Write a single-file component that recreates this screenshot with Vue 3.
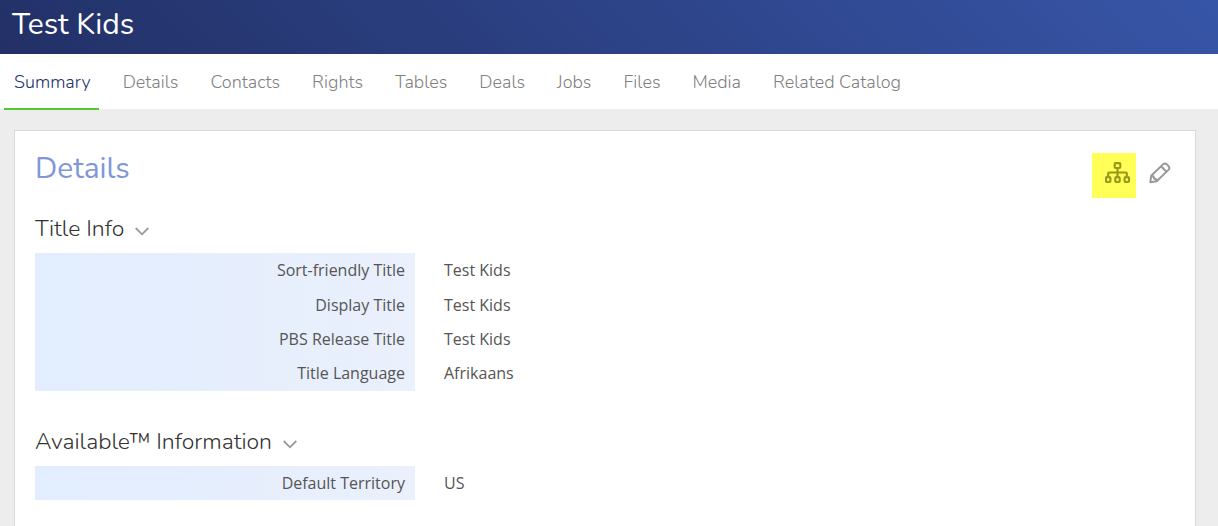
<script setup>
import { ref, reactive } from 'vue'

const tabs = ['Summary', 'Details', 'Contacts', 'Rights', 'Tables', 'Deals', 'Jobs', 'Files', 'Media', 'Related Catalog']
const active = ref('Summary')

const sections = reactive([
  {
    title: 'Title Info',
    open: true,
    rows: [
      ['Sort-friendly Title', 'Test Kids'],
      ['Display Title', 'Test Kids'],
      ['PBS Release Title', 'Test Kids'],
      ['Title Language', 'Afrikaans'],
    ],
  },
  {
    title: 'Available™ Information',
    open: true,
    rows: [['Default Territory', 'US']],
  },
])
</script>

<template>
  <div class="page">
    <header class="banner">
      <h1>Test Kids</h1>
    </header>
    <nav class="tabs">
      <a
        v-for="tab in tabs"
        :key="tab"
        href="#"
        :class="{ active: tab === active }"
        @click.prevent="active = tab"
      >{{ tab }}</a>
    </nav>
    <main class="card">
      <div class="card-head">
        <h2>Details</h2>
        <div class="actions">
          <button class="hierarchy" type="button" aria-label="Show hierarchy">
            <svg width="26" height="22" viewBox="0 0 26 22" fill="none" stroke="currentColor" stroke-width="2.2" stroke-linejoin="round">
              <rect x="9.700" y="1.200" width="5.600" height="4.800" rx="1" />
              <path d="M12.500 6v8M3.200 14v-2.500q0-1 1-1h16.600q1 0 1 1V14" />
              <rect x="1" y="15.200" width="4.400" height="4.800" rx="1" />
              <rect x="10.300" y="15.200" width="4.400" height="4.800" rx="1" />
              <rect x="19.600" y="15.200" width="4.400" height="4.800" rx="1" />
            </svg>
          </button>
          <button class="edit" type="button" aria-label="Edit">
            <svg width="22" height="22" viewBox="0 0 22 22" fill="none" stroke="currentColor" stroke-width="2" stroke-linejoin="round">
              <path d="M1.300 20.200l.9-6.400L14.200 2.100q1.700-1.300 3.300 0l2.200 2.200q1.300 1.700 0 3.300L7.700 19.300zM2.200 13.800q2.800 0 2.800 2.800 2.700 0 2.700 2.700M12 4.300l5.500 5.500" />
            </svg>
          </button>
        </div>
      </div>
      <section v-for="section in sections" :key="section.title">
        <h3>
          <button type="button" :aria-expanded="section.open" @click="section.open = !section.open">
            {{ section.title }}
            <svg width="14" height="9" viewBox="0 0 14 9" fill="none" stroke="#999" stroke-width="1.8">
              <path d="M.7 1l6.300 6.300L13.300 1" />
            </svg>
          </button>
        </h3>
        <table v-if="section.open">
          <tbody>
            <tr v-for="[label, value] in section.rows" :key="label">
              <th scope="row">{{ label }}</th>
              <td>{{ value }}</td>
            </tr>
          </tbody>
        </table>
      </section>
    </main>
  </div>
</template>

<style>
body {
  background: #ededed;
}
</style>

<style scoped>
.page {
  display: flex;
  flex-direction: column;
  min-height: 100vh;
  font-family: "Open Sans", sans-serif;
  font-size: 16px;
  line-height: 24px;
  color: #555;
}
h1, h2, h3 {
  margin: 0;
  font-family: Nunito, Lato, sans-serif;
  font-weight: 400;
}
.banner {
  padding: 5px 12px 9px;
  background: linear-gradient(45deg, #223066, #3755a7);
  color: #fff;
}
h1 {
  font-size: 30px;
  line-height: 40px;
}
.tabs {
  display: flex;
  gap: 14px;
  padding: 0 4px;
  height: 55px;
  background: #fff;
  font-family: Nunito, Lato, sans-serif;
  font-size: 18px;
  font-weight: 300;
}
.tabs a {
  margin-bottom: -1px;
  padding: 16px 8px 14px 10px;
  border-bottom: 2px solid transparent;
  color: #808080;
  text-decoration: none;
  white-space: nowrap;
}
.tabs a.active {
  border-color: #4fcb30;
  color: #223066;
}
.card {
  flex: 1;
  margin: 21px 22px 0 14px;
  padding: 22px 15px 0 20px;
  border: 1px solid #d9d9d9;
  border-bottom: 0;
  background: #fff;
}
.card-head {
  display: flex;
  justify-content: space-between;
  align-items: flex-start;
  margin-bottom: 15px;
}
h2 {
  padding-top: 4px;
  color: #7f97d6;
  font-size: 30px;
  line-height: 24px;
}
button {
  border: 0;
  margin: 0;
  padding: 0;
  background: none;
  color: inherit;
  font: inherit;
  cursor: pointer;
}
.actions {
  display: flex;
}
.actions svg {
  display: block;
}
.hierarchy {
  padding: 9px 5px 14px 13px;
  background: #ffff58;
  color: #98981c;
}
.edit {
  padding: 9px 9px 14px 13px;
  color: #999;
}
section + section {
  margin-top: 35px;
}
h3 {
  padding-bottom: 8px;
  font-size: 23px;
  font-weight: 300;
  line-height: 32px;
}
h3 button {
  display: flex;
  align-items: center;
  gap: 11px;
  color: #333;
}
h3 svg {
  margin-top: 4px;
}
table {
  width: 100%;
  border-collapse: collapse;
}
th {
  box-sizing: border-box;
  width: 380px;
  padding: 5px 10px;
  background: linear-gradient(to right, #e2edff, #eaf0fc);
  font-weight: 400;
  text-align: right;
}
td {
  padding: 5px 29px;
}
tr:not(:only-child):first-child > *,
tr:not(:only-child):last-child > * {
  padding-bottom: 6px;
}
</style>
